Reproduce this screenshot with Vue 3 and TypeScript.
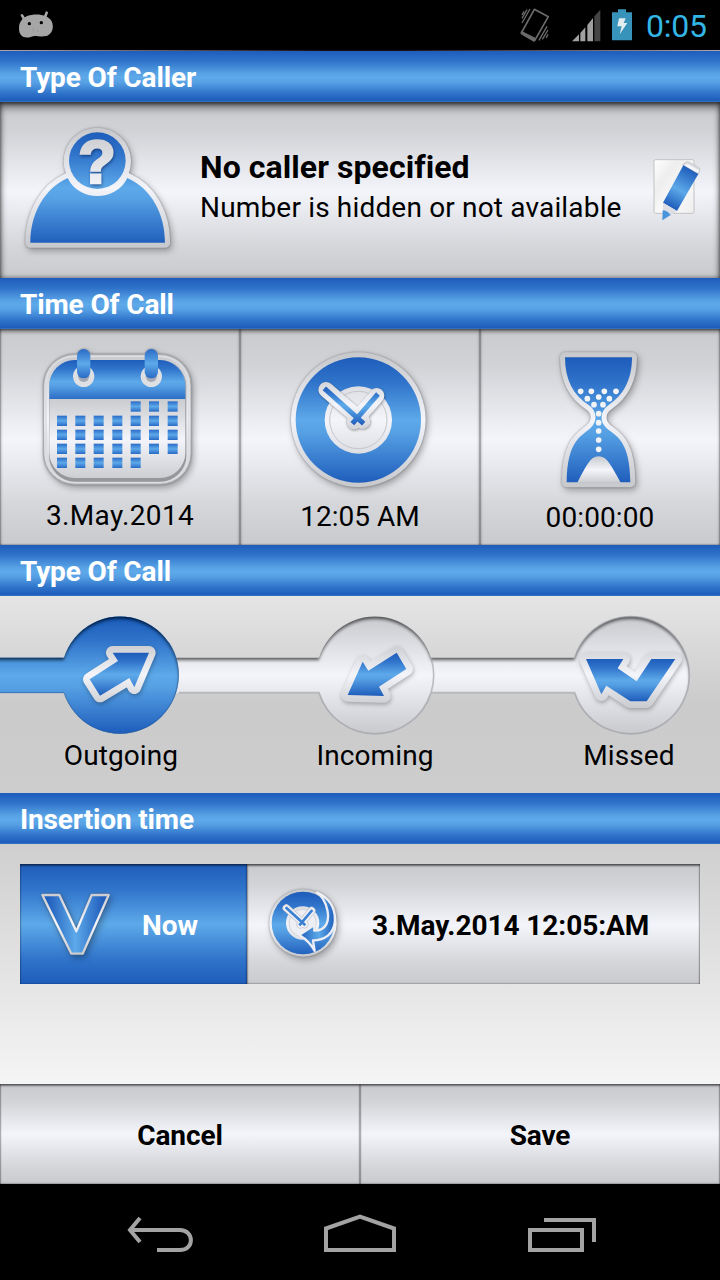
<script setup lang="ts">
import { ref } from 'vue'

type CallType = 'Outgoing' | 'Incoming' | 'Missed'

interface Ramp {
  id: string
  y1: number
  y2: number
}

// vertical extents of the blue/silver ramps, in each icon's own units
const ramps: Ramp[] = [
  { id: 'caller', y1: 105, y2: 445 },
  { id: 'cal', y1: 110, y2: 490 },
  { id: 'calhead', y1: 120, y2: 250 },
  { id: 'calpage', y1: 232, y2: 486 },
  { id: 'clock', y1: 110, y2: 490 },
  { id: 'hands', y1: 195, y2: 315 },
  { id: 'handrim', y1: 160, y2: 350 },
  { id: 'glass', y1: 115, y2: 490 },
  { id: 'mound', y1: 409, y2: 490 },
  { id: 'slider', y1: 82, y2: 430 },
  { id: 'arrow', y1: 188, y2: 318 },
  { id: 'rim', y1: 155, y2: 355 },
  { id: 'missed', y1: 207, y2: 334 },
  { id: 'now', y1: 140, y2: 330 },
]

const dayColumns = [171, 226, 281, 337, 392, 447, 503]
const dayRows = [
  { y: 244, from: 4, to: 6 },
  { y: 287, from: 0, to: 6 },
  { y: 329, from: 0, to: 6 },
  { y: 371, from: 0, to: 6 },
  { y: 413, from: 0, to: 4 },
]
const days = dayRows.flatMap(row =>
  dayColumns.slice(row.from, row.to + 1).map(x => ({ x, y: row.y })),
)

const sand = [
  [332, 214], [364, 214], [403, 214], [438, 214],
  [352, 236], [386, 231], [418, 236],
  [372, 254], [399, 254],
  [386, 281], [386, 308], [386, 333], [386, 360], [386, 388],
]

const arrows: Record<CallType, string> = {
  Outgoing: '338,188 447,188 403,292 388,264 300,317 269,268 354,213',
  Incoming: '1190,188 1219,237 1137,290 1152,318 1043,315 1088,215 1105,242',
  Missed: '1758,207 1870,207 1853,235 1910,274 1954,207 2026,207 1940,334 1891,334 1819,287 1804,313',
}
const callTypes: { name: CallType; cx: number }[] = [
  { name: 'Outgoing', cx: 360 },
  { name: 'Incoming', cx: 1125 },
  { name: 'Missed', cx: 1892 },
]
const selected = ref<CallType>('Outgoing')
</script>

<template>
  <div class="screen">
    <svg class="defs" width="0" height="0">
      <defs>
        <template v-for="r in ramps" :key="r.id">
          <linearGradient :id="`b-${r.id}`" gradientUnits="userSpaceOnUse" x1="0" x2="0" :y1="r.y1" :y2="r.y2">
            <stop offset="0" stop-color="#1e5dbb" />
            <stop offset=".2" stop-color="#2f73ca" />
            <stop offset=".5" stop-color="#5da9e9" />
            <stop offset=".6" stop-color="#56a0e4" />
            <stop offset="1" stop-color="#1e5dbb" />
          </linearGradient>
          <linearGradient :id="`s-${r.id}`" gradientUnits="userSpaceOnUse" x1="0" x2="0" :y1="r.y1" :y2="r.y2">
            <stop offset="0" stop-color="#c9cace" />
            <stop offset=".5" stop-color="#f4f5fa" />
            <stop offset="1" stop-color="#c9cace" />
          </linearGradient>
        </template>
        <linearGradient id="v-fill">
          <stop offset="0" stop-color="#1e5dbb" />
          <stop offset=".1" stop-color="#2361be" />
          <stop offset=".5" stop-color="#5da9e9" />
          <stop offset=".9" stop-color="#2361be" />
          <stop offset="1" stop-color="#1e5dbb" />
        </linearGradient>
        <linearGradient id="day" x1="0" x2="0" y1="0" y2="1">
          <stop offset="0" stop-color="#2a6bc6" />
          <stop offset=".5" stop-color="#5da9e9" />
          <stop offset="1" stop-color="#2a6bc6" />
        </linearGradient>
        <linearGradient id="paper" x1="0" x2="1" y1="0" y2="1">
          <stop offset="0" stop-color="#fff" />
          <stop offset=".3" stop-color="#eee" />
          <stop offset=".6" stop-color="#fafafa" />
          <stop offset="1" stop-color="#eee" />
        </linearGradient>
        <filter id="sunken" x="-5%" y="-10%" width="110%" height="120%">
          <feOffset in="SourceAlpha" dy="8" result="o" />
          <feGaussianBlur in="o" stdDeviation="4" result="blur" />
          <feComposite in="SourceAlpha" in2="blur" operator="out" result="edge" />
          <feFlood flood-color="#000" flood-opacity=".85" />
          <feComposite in2="edge" operator="in" result="shade" />
          <feMerge>
            <feMergeNode in="SourceGraphic" />
            <feMergeNode in="shade" />
          </feMerge>
        </filter>
      </defs>
    </svg>

    <header class="status">
      <svg width="36" height="30" viewBox="54 30 108 90">
        <g fill="#a6a6a6">
          <path d="M57 85C57 63 71 48 94 45C120 41 144 46 155 64C163 80 158 107 134 109C112 110 104 105 94 110C75 117 57 111 57 85Z" />
          <path d="M66 46L73 58M140 38L135 51" stroke="#a6a6a6" stroke-width="8" stroke-linecap="round" />
        </g>
        <circle cx="88" cy="71" r="5" />
        <circle cx="124" cy="68" r="5" />
        <path d="M100 85V96M112 94H117" stroke="#777" stroke-width="2" stroke-dasharray="2 4" />
      </svg>
      <div class="tray">
        <svg class="vibrate" width="30" height="36" viewBox="480 21 90 108" fill="none" stroke="#6b6b6b">
          <path d="M523 28L565 50L524 122L484 99Z" stroke-width="5" stroke-linejoin="round" />
          <path d="M484 94L526 115L522 124L484 102Z" fill="#6b6b6b" stroke-width="3" />
          <path d="M492 34L486 45M501 29L486 55M510 27L486 69M564 103L558 114M564 90L547 118M561 79L537 121" stroke-width="4" />
        </svg>
        <svg class="signal" width="29" height="33" viewBox="635 25 87 99">
          <path d="M635 122L656 101V122Z" fill="#a0a0a0" />
          <path d="M660 97L675 80V122H660Z" fill="#a0a0a0" />
          <path d="M681 73L698 52V122H681Z" fill="#a0a0a0" />
          <path d="M702 47L720 27V122H702Z" fill="#454545" />
        </svg>
        <svg class="battery" width="20" height="32" viewBox="756 26 60 96">
          <path d="M774 27H798V36H816V120H756V36H774Z" fill="#3793b9" />
          <path d="M777 54H797L791 68H802L779 102L785 78H772Z" fill="#e2edf2" />
        </svg>
        <span class="clock">0:05</span>
      </div>
    </header>

    <h2 class="bar">Type Of Caller</h2>
    <section class="caller silver">
      <svg class="raised" width="160" height="135" viewBox="60 75 480 405">
        <path d="M91 440C91 355 132 278 203 246H382C455 278 495 355 495 440Z" fill="url(#s-caller)" stroke="url(#s-caller)" stroke-width="31" stroke-linejoin="round" />
        <path d="M91 440C91 355 132 278 203 246C237 318 347 318 382 246C455 278 495 355 495 440Z" fill="url(#b-caller)" />
        <circle cx="292" cy="196" r="101" fill="url(#s-caller)" />
        <circle cx="292" cy="194" r="85" fill="url(#b-caller)" />
        <text class="mark" x="291" y="261" text-anchor="middle" fill="url(#s-caller)" stroke="url(#s-caller)">?</text>
      </svg>
      <div class="who">
        <strong>No caller specified</strong>
        <span>Number is hidden or not available</span>
      </div>
      <svg class="edit" width="53" height="68" viewBox="870 180 159 204">
        <rect x="882" y="194" width="120" height="161" rx="5" fill="url(#paper)" stroke="#c2c2c4" stroke-width="3" />
        <path d="M967 210L976 202Q982 198 990 203L1017 218Q1021 221 1019 227L1015 237Z" fill="#d9dade" stroke="#bbb" stroke-width="2" />
        <path d="M973 211L982 206L1017 226L1014 235Z" fill="#f4f5fa" />
        <path d="M970 211L1015 237L951 348L909 323Z" fill="url(#pencil)" />
        <path d="M909 323L951 348L932 362L908 346Z" fill="#dcdee4" />
        <path d="M908 346Q922 346 932 360L907 376Z" fill="#4b94dc" />
        <linearGradient id="pencil" gradientUnits="userSpaceOnUse" x1="992" y1="222" x2="930" y2="336">
          <stop offset="0" stop-color="#1e5dbb" />
          <stop offset=".55" stop-color="#5da9e9" />
          <stop offset="1" stop-color="#1e5dbb" />
        </linearGradient>
      </svg>
    </section>

    <h2 class="bar">Time Of Call</h2>
    <section class="times">
      <div class="cell silver">
        <svg class="raised" width="157" height="140" viewBox="120 81 471 420">
          <rect x="131" y="103" width="442" height="390" rx="92" fill="url(#s-cal)" stroke="#a5a6aa" stroke-width="3" />
          <rect x="138" y="109" width="428" height="378" rx="86" fill="none" stroke="#dcdde1" stroke-width="5" />
          <rect x="147" y="121" width="412" height="364" rx="78" fill="#96979b" />
          <rect x="148" y="120" width="408" height="354" rx="76" fill="url(#s-calpage)" />
          <path d="M148 237V196A76 76 0 0 1 224 120H480A76 76 0 0 1 556 196V237Z" fill="url(#b-calhead)" />
          <g v-for="x in [251, 454]" :key="x">
            <circle :cx="x" cy="169" r="32" fill="#dfe0e4" />
            <circle :cx="x" cy="169" r="17" fill="#a5a9b5" />
            <rect :x="x - 20" y="87" width="40" height="88" rx="20" fill="url(#day)" />
          </g>
          <rect v-for="d in days" :key="`${d.x}-${d.y}`" :x="d.x" :y="d.y" width="30" height="31" fill="url(#day)" />
        </svg>
        <span class="date">3.May.2014</span>
      </div>
      <div class="cell silver">
        <svg class="raised" width="145" height="140" viewBox="141 90 435 420">
          <circle cx="355" cy="299" r="202" fill="url(#s-clock)" />
          <circle cx="355" cy="300" r="188" fill="url(#b-clock)" />
          <circle cx="355" cy="300" r="101" fill="url(#s-clock)" />
          <circle cx="355" cy="300" r="86" fill="url(#s-clock)" stroke="#c5c6ca" stroke-width="3" />
          <g class="raised">
            <path d="M258 209L368 304M410 227L342 306" stroke="url(#s-handrim)" stroke-width="46" stroke-linecap="round" />
            <path d="M253 205L371 311M414 222L337 311" stroke="url(#b-hands)" stroke-width="15" />
          </g>
        </svg>
        <span class="hour">12:05 AM</span>
      </div>
      <div class="cell silver">
        <svg class="raised" width="83" height="144" viewBox="261 81 249 432">
          <path d="M285 112H486C486 180 460 226 415 256C391 272 387 305 410 325C437 348 480 360 481 487H290C291 360 336 348 361 325C384 305 381 272 357 256C310 226 285 180 285 112Z" fill="url(#s-glass)" stroke="url(#s-glass)" stroke-width="30" stroke-linejoin="round" />
          <path d="M285 112H486C486 180 460 226 415 256C391 272 387 305 410 325C437 348 480 360 481 487H290C291 360 336 348 361 325C384 305 381 272 357 256C310 226 285 180 285 112Z" fill="url(#b-glass)" />
          <path d="M322 488C348 440 360 409 386 409C412 409 425 440 452 488Z" fill="url(#s-mound)" />
          <circle v-for="([x, y], i) in sand" :key="i" :cx="x" :cy="y" r="8.5" fill="#f2f3f6" />
        </svg>
        <span class="length">00:00:00</span>
      </div>
    </section>

    <h2 class="bar">Type Of Call</h2>
    <section class="types">
      <svg width="720" height="145" viewBox="0 18 2160 435">
        <g filter="url(#sunken)" fill="url(#s-slider)">
          <rect x="400" y="203" width="1400" height="106" />
          <circle cx="1125" cy="255.500" r="176" />
          <circle cx="1892" cy="255.500" r="176" />
        </g>
        <path d="M536 308H957A176 176 0 0 0 1293 308H1724A176 176 0 1 0 1724 203M1293 308A176 176 0 0 0 1293 203" fill="none" stroke="#999ba2" stroke-opacity=".6" stroke-width="5" />
        <g filter="url(#sunken)" fill="url(#b-slider)">
          <rect x="-20" y="203" width="260" height="106" />
          <circle cx="360" cy="255.500" r="176" />
        </g>
        <path d="M0 308H192A176 176 0 1 0 505 155" fill="none" stroke="#285b9b" stroke-opacity=".6" stroke-width="3" />
        <g v-for="t in callTypes" :key="t.name" class="lift" @click="selected = t.name">
          <circle :cx="t.cx" cy="255" r="170" fill="transparent" />
          <polygon :points="arrows[t.name]" fill="url(#s-rim)" stroke="url(#s-rim)" stroke-width="40" stroke-linejoin="round" />
          <polygon :points="arrows[t.name]" :fill="t.name === 'Missed' ? 'url(#b-missed)' : 'url(#b-arrow)'" />
        </g>
      </svg>
      <div class="labels">
        <span v-for="t in callTypes" :key="t.name">{{ t.name }}</span>
      </div>
    </section>

    <h2 class="bar">Insertion time</h2>
    <section class="insertion">
      <div class="toggle">
        <div class="now">
          <svg class="raised" width="76" height="69" viewBox="114 135 228 207">
            <path d="M127 150H178L229 259L275 150H326L248 326H214Z" fill="url(#v-fill)" stroke="url(#s-now)" stroke-width="7" stroke-linejoin="round" />
          </svg>
          <span>Now</span>
        </div>
        <div class="stamp">
          <svg class="raised" width="75" height="75" viewBox="798 120 225 225">
            <circle cx="909" cy="231" r="101" fill="url(#s-now)" />
            <circle cx="909" cy="231" r="94" fill="url(#b-now)" />
            <circle cx="908" cy="231" r="50" fill="url(#s-now)" />
            <circle cx="908" cy="231" r="41" fill="#eeeff4" stroke="#c5c6ca" stroke-width="2" />
            <path d="M859 186L914 235M935 194L901 236" stroke="#c4c6cb" stroke-width="23" stroke-linecap="round" />
            <path d="M859 186L914 235M935 194L901 236" stroke="#eeeff4" stroke-width="19" stroke-linecap="round" />
            <path d="M857 184L916 238M937 192L898 238" stroke="#3b80d2" stroke-width="8" />
            <path d="M951 139C992 158 1008 190 1004 230C1000 263 975 283 939 283L944 315C936 299 924 283 898 267L943 237V254C980 253 989 225 982 192C977 168 967 151 951 139Z" fill="url(#swoosh)" stroke="#eceef3" stroke-width="7" stroke-linejoin="round" />
            <linearGradient id="swoosh">
              <stop offset="0" stop-color="#1e5dbb" />
              <stop offset=".55" stop-color="#5da9e9" />
              <stop offset="1" stop-color="#1e5dbb" />
            </linearGradient>
          </svg>
          <span>3.May.2014 12:05:AM</span>
        </div>
      </div>
    </section>

    <footer class="actions">
      <button type="button">Cancel</button>
      <button type="button">Save</button>
    </footer>
    <nav class="nav">
      <svg width="720" height="96" viewBox="0 0 720 96" fill="none" stroke="#a3a3a3" stroke-width="4">
        <path d="M140 34L130 46L140 58M129 46H180C194 46 195 66 180 66H157" />
        <path d="M326 44.500L360 32.500L394 44.500V66H326Z" />
        <path d="M530 46H582V66H530ZM544 36H594V58" />
      </svg>
    </nav>
  </div>
</template>

<style>
body {
  margin: 0;
  background: #000;
}
</style>

<style scoped>
.screen {
  width: 720px;
  height: 1280px;
  overflow: hidden;
  display: flex;
  flex-direction: column;
  font-family: Roboto, "Liberation Sans", sans-serif;
  font-size: 28px;
  line-height: 32px;
  color: #000;
  background: #000;
}

.defs {
  position: absolute;
}

svg {
  display: block;
  flex: none;
  overflow: visible;
}

.raised {
  filter: drop-shadow(0 0 1px rgba(60, 60, 65, 0.45)) drop-shadow(2px 3px 3px rgba(0, 0, 0, 0.3));
}

.lift polygon:first-of-type {
  filter: drop-shadow(2px 6px 7px rgba(0, 0, 0, 0.28));
}

.status {
  box-sizing: border-box;
  height: 51px;
  padding: 0 13px 0 18px;
  display: flex;
  align-items: center;
  justify-content: space-between;
  border-bottom: 1px solid;
  border-image: linear-gradient(90deg, #aaa, #111 45%, #111 55%, #aaa) 1;
}

.tray {
  display: flex;
  align-items: center;
}

.signal {
  margin-left: 22px;
}

.battery {
  margin-left: 11px;
}

.clock {
  width: 61px;
  margin-left: 14px;
  font-size: 32px;
  letter-spacing: -0.2px;
  color: #33b5e5;
  padding-top: 2px;
}

.bar {
  box-sizing: border-box;
  height: 51px;
  flex: none;
  margin: 0;
  padding: 10px 20px 0;
  font-size: 28px;
  line-height: 33px;
  font-weight: 700;
  letter-spacing: -0.14px;
  color: #fff;
  background: linear-gradient(#1e5dbb, #2f73ca 20%, #56a0e4 43%, #5da9e9 52%, #56a0e4 62%, #2f73ca 83%, #1e5dbb 97%, #3c76c6);
}

.silver {
  background: linear-gradient(#c9cace, #d2d3d7 17%, #f4f5fa 51%, #d5d6da 82%, #c9cace);
}

.caller {
  box-sizing: border-box;
  height: 176px;
  padding: 0 17px 0 20px;
  display: flex;
  align-items: center;
  box-shadow: inset 0 6px 8px -1px rgba(0, 0, 0, 0.55), inset 0 2px 3px rgba(0, 0, 0, 0.3), inset 0 0 5px rgba(0, 0, 0, 0.5);
}

.caller > .raised {
  margin-top: -4px;
}

.mark {
  font-family: "Liberation Sans", sans-serif;
  font-size: 184px;
  font-weight: 700;
  stroke-width: 8px;
  filter: drop-shadow(2px 5px 4px rgba(0, 20, 70, 0.5));
}

.who {
  flex: 1;
  margin: -8px 0 0 20px;
  display: flex;
  flex-direction: column;
  gap: 6px;
  white-space: nowrap;
  letter-spacing: 0.17px;
}

.who strong {
  font-size: 32px;
  line-height: 38px;
  letter-spacing: 0.07px;
}

.edit {
  margin-top: -2px;
}

.times {
  display: flex;
  height: 216px;
}

.cell {
  box-sizing: border-box;
  width: 240px;
  padding-top: 18px;
  display: flex;
  flex-direction: column;
  align-items: center;
  box-shadow: inset 0 3px 4px -1px rgba(0, 0, 0, 0.6), inset 0 0 2px rgba(0, 0, 0, 0.75);
}

.cell > svg {
  margin-right: 3px;
}

.cell:nth-child(2) {
  padding-top: 21px;
}

.cell:nth-child(2) > svg {
  margin-right: 1px;
}

.date {
  margin-top: 13px;
  letter-spacing: 0.35px;
}

.hour {
  margin-top: 11px;
}

.length {
  margin-top: 11px;
  letter-spacing: 0.1px;
}

.types {
  height: 197px;
  background: linear-gradient(#e5e5e5, #cbcbcb 55%, #cdcdcd);
}

.labels {
  display: grid;
  grid-template-columns: repeat(3, 254px);
  margin: -1px 0 0 -6px;
  text-align: center;
  letter-spacing: 0.1px;
}

.insertion {
  box-sizing: border-box;
  height: 240px;
  padding: 20px;
  background: linear-gradient(#cfcfcf, #f5f5f5);
}

.toggle {
  display: flex;
  height: 120px;
  font-weight: 700;
}

.now {
  box-sizing: border-box;
  width: 227px;
  padding: 0 0 0 18px;
  display: flex;
  align-items: center;
  gap: 28px;
  color: #fff;
  background: linear-gradient(#1e5dbb, #2f73ca 20%, #5da9e9 50%, #2f73ca 80%, #1e5dbb);
  box-shadow: inset 0 2px 2px rgba(0, 0, 0, 0.45), inset 0 0 2px rgba(0, 0, 30, 0.5);
}

.now span,
.stamp span {
  padding-top: 4px;
  white-space: nowrap;
}

.stamp {
  box-sizing: border-box;
  width: 453px;
  padding-left: 19px;
  display: flex;
  align-items: center;
  gap: 31px;
  letter-spacing: -0.05px;
  background: linear-gradient(#c9cace, #d2d3d7 17%, #f4f5fa 51%, #d5d6da 82%, #c9cace);
  box-shadow: inset 0 2px 2px rgba(0, 0, 0, 0.5), inset 0 0 2px rgba(0, 0, 0, 0.7);
}

.stamp svg {
  margin-top: -2px;
}

.actions {
  display: flex;
  height: 100px;
}

.actions button {
  width: 360px;
  border: 0;
  padding: 4px 0 0;
  font: 700 28px/32px Roboto, "Liberation Sans", sans-serif;
  letter-spacing: -0.1px;
  color: #000;
  background: linear-gradient(#c9cace, #d2d3d7 17%, #f4f5fa 50%, #d5d6da 82%, #c9cace);
  box-shadow: inset 0 2px 2px rgba(0, 0, 0, 0.45), inset 0 0 2px rgba(0, 0, 0, 0.75);
}

.nav {
  height: 96px;
}
</style>
